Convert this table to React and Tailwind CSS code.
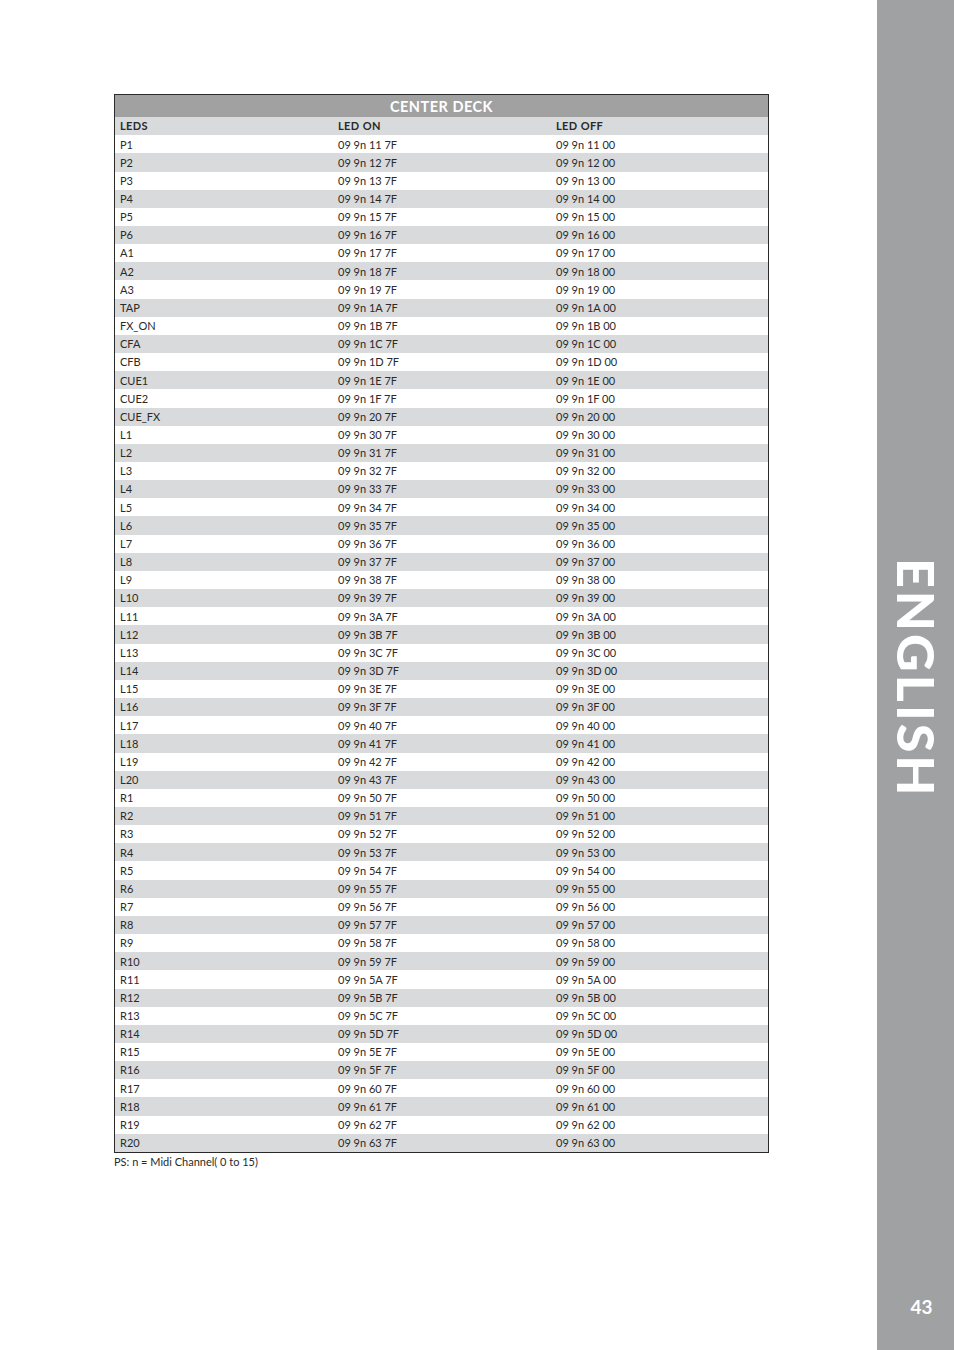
import React from 'react';

const hex = (n) => n.toString(16).toUpperCase().padStart(2, '0');

const names = [
	['P1', 0x11], ['P2', 0x12], ['P3', 0x13], ['P4', 0x14], ['P5', 0x15], ['P6', 0x16],
	['A1', 0x17], ['A2', 0x18], ['A3', 0x19],
	['TAP', 0x1a], ['FX_ON', 0x1b], ['CFA', 0x1c], ['CFB', 0x1d], ['CUE1', 0x1e], ['CUE2', 0x1f], ['CUE_FX', 0x20],
];
for (let i = 0; i < 20; i++) names.push([`L${i + 1}`, 0x30 + i]);
for (let i = 0; i < 20; i++) names.push([`R${i + 1}`, 0x50 + i]);

const rows = names.map(([led, code]) => ({
	led,
	on: `09 9n ${hex(code)} 7F`,
	off: `09 9n ${hex(code)} 00`,
}));

const font = { fontFamily: 'Lato, "Open Sans", sans-serif' };

const App = () => {
	return (
		<div className="flex w-[954px] h-[1350px] bg-white text-[#2a2a2a]" style={font}>
			<div className="flex-1 pl-[114px] pt-[94px]">
				<div className="w-[655px] border border-[#2a2a2a]">
					<div className="h-[22px] pt-[2px] bg-[#a1a1a1] flex items-center justify-center text-white font-bold text-[14.5px] tracking-[0.5px]">
						CENTER DECK
					</div>
					<div className="grid grid-cols-[218px_218px_1fr] h-[18.2px] pt-[1px] items-center bg-[#d9dadb] text-[11px] font-bold tracking-[0.4px]">
						<span className="pl-[5px]">LEDS</span>
						<span className="pl-[5px]">LED ON</span>
						<span className="pl-[5px]">LED OFF</span>
					</div>
					{rows.map((r, i) => (
						<div
							key={r.led}
							className={`grid grid-cols-[218px_218px_1fr] h-[18.16px] pt-[1px] items-center text-[11px] ${
								i % 2 === 1 ? 'bg-[#d9dadb]' : 'bg-white'
							}`}
						>
							<span className="pl-[5px]">{r.led}</span>
							<span className="pl-[5px]">{r.on}</span>
							<span className="pl-[5px]">{r.off}</span>
						</div>
					))}
				</div>
				<p className="text-[11px] mt-[2px] leading-[14px]">PS: n = Midi Channel( 0 to 15)</p>
			</div>

			<div className="w-[77px] bg-[#a0a1a3] flex flex-col items-center text-white">
				<div className="pt-[558px] pl-[2px] [writing-mode:vertical-rl] font-black text-[52px] leading-none tracking-[3px]">
					ENGLISH
				</div>
				<div className="mt-auto mb-[34px] pl-[12px] font-bold text-[19px] leading-none">43</div>
			</div>
		</div>
	);
};

export default App;
